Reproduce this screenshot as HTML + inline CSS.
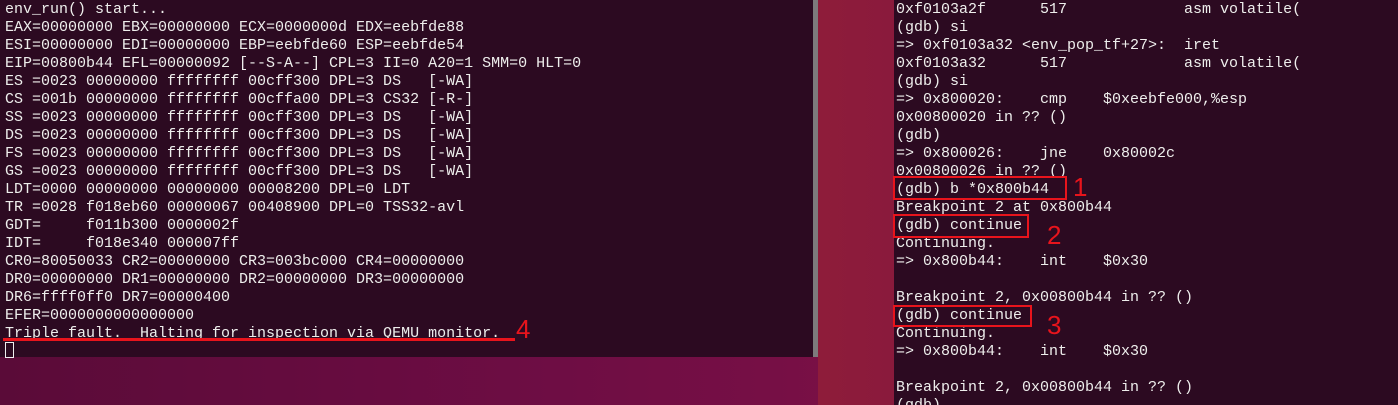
<!DOCTYPE html>
<html><head><meta charset="utf-8"><style>
*{margin:0;padding:0;box-sizing:border-box}
html,body{width:1398px;height:405px;overflow:hidden}
body{position:relative;background:linear-gradient(90deg,#5a0b38 0%,#6e0d44 40%,#7e1146 70%,#8c1a3e 100%);font-family:"Liberation Mono",monospace;font-size:15px;color:#eeeeec}
.t{position:absolute;background:#2c0a21;white-space:pre;line-height:18px}
#L{left:0;top:0;width:813px;height:357px;padding-left:5px;padding-top:1px}
#sb{position:absolute;left:813px;top:0;width:5px;height:357px;background:#7d7a7c}
#strip{position:absolute;left:818px;top:0;width:76px;height:405px;background:linear-gradient(90deg,#8e1c3a,#8a1a3c)}
#R{left:894px;top:0;width:504px;height:405px;padding-left:2px;padding-top:1px}
.box{position:absolute;border:2px solid #e8141c}
.n{position:absolute;color:#e8141c;font-family:"Liberation Sans",sans-serif;font-size:26px;line-height:26px}
.cur{position:absolute;left:5px;top:342px;width:9px;height:16px;border:1px solid #eee}
</style></head><body>
<div class="t" id="L">env_run() start...
EAX=00000000 EBX=00000000 ECX=0000000d EDX=eebfde88
ESI=00000000 EDI=00000000 EBP=eebfde60 ESP=eebfde54
EIP=00800b44 EFL=00000092 [--S-A--] CPL=3 II=0 A20=1 SMM=0 HLT=0
ES =0023 00000000 ffffffff 00cff300 DPL=3 DS   [-WA]
CS =001b 00000000 ffffffff 00cffa00 DPL=3 CS32 [-R-]
SS =0023 00000000 ffffffff 00cff300 DPL=3 DS   [-WA]
DS =0023 00000000 ffffffff 00cff300 DPL=3 DS   [-WA]
FS =0023 00000000 ffffffff 00cff300 DPL=3 DS   [-WA]
GS =0023 00000000 ffffffff 00cff300 DPL=3 DS   [-WA]
LDT=0000 00000000 00000000 00008200 DPL=0 LDT
TR =0028 f018eb60 00000067 00408900 DPL=0 TSS32-avl
GDT=     f011b300 0000002f
IDT=     f018e340 000007ff
CR0=80050033 CR2=00000000 CR3=003bc000 CR4=00000000
DR0=00000000 DR1=00000000 DR2=00000000 DR3=00000000
DR6=ffff0ff0 DR7=00000400
EFER=0000000000000000
Triple fault.  Halting for inspection via QEMU monitor.</div>
<div class="cur"></div>
<div id="sb"></div>
<div id="strip"></div>
<div class="t" id="R">0xf0103a2f      517             asm volatile(
(gdb) si
=> 0xf0103a32 &lt;env_pop_tf+27&gt;:  iret
0xf0103a32      517             asm volatile(
(gdb) si
=> 0x800020:    cmp    $0xeebfe000,%esp
0x00800020 in ?? ()
(gdb)
=> 0x800026:    jne    0x80002c
0x00800026 in ?? ()
(gdb) b *0x800b44
Breakpoint 2 at 0x800b44
(gdb) continue
Continuing.
=> 0x800b44:    int    $0x30

Breakpoint 2, 0x00800b44 in ?? ()
(gdb) continue
Continuing.
=> 0x800b44:    int    $0x30

Breakpoint 2, 0x00800b44 in ?? ()
(gdb)</div>
<div class="box" style="left:893px;top:176px;width:174px;height:24px"></div>
<div class="n" style="left:1073px;top:174px">1</div>
<div class="box" style="left:893px;top:214px;width:136px;height:24px"></div>
<div class="n" style="left:1047px;top:222px">2</div>
<div class="box" style="left:893px;top:305px;width:139px;height:22px"></div>
<div class="n" style="left:1047px;top:312px">3</div>
<div style="position:absolute;left:3px;top:338px;width:512px;height:3px;background:#e8141c"></div>
<div class="n" style="left:516px;top:316px">4</div>
</body></html>
